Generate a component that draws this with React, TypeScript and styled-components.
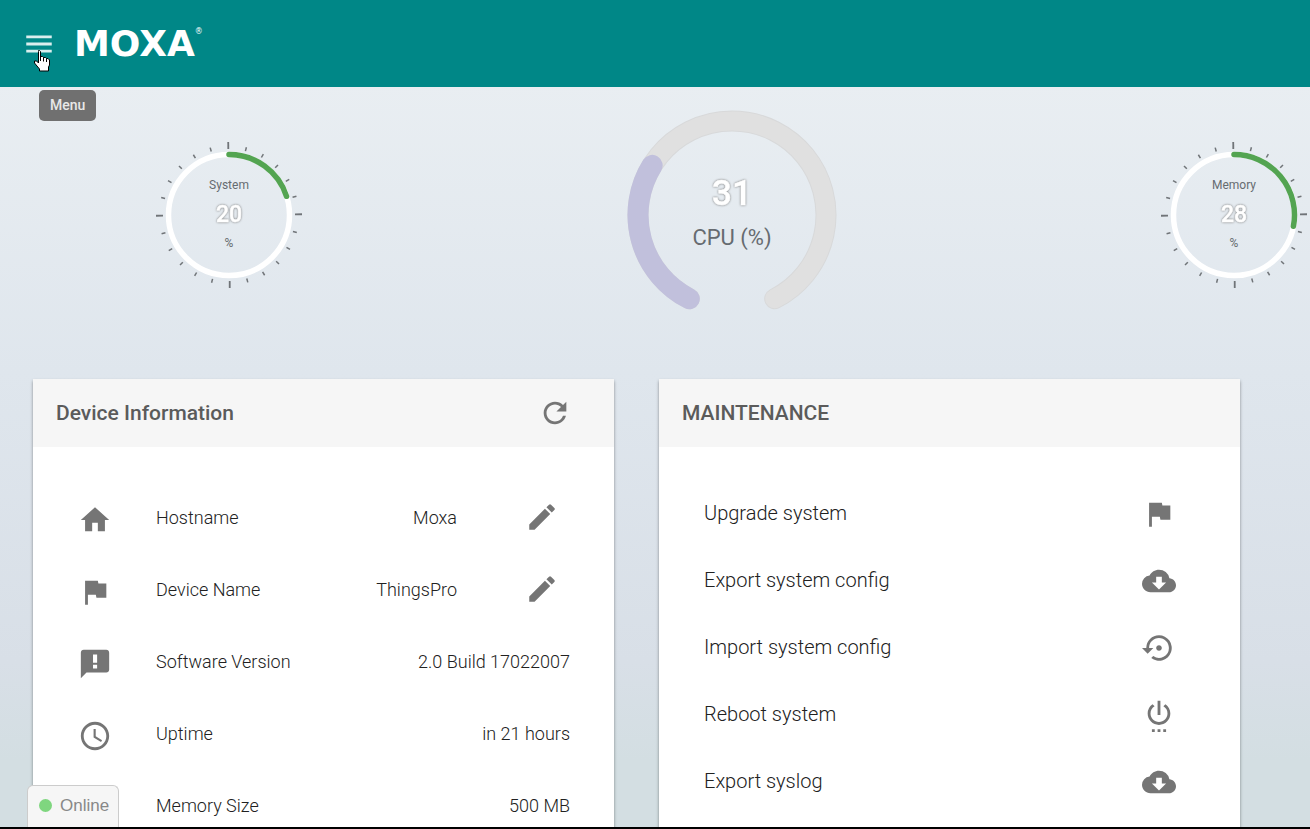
import React from "react";
import styled, { createGlobalStyle } from "styled-components";
import type { IconType } from "react-icons";
import {
  MdMenu, MdHome, MdFlag, MdAccessTime, MdMemory, MdEdit, MdRefresh,
  MdCloudDownload, MdSettingsBackupRestore, MdSettingsPower,
} from "react-icons/md";

const GlobalStyle = createGlobalStyle`
  *, *::before, *::after { box-sizing: border-box; }
  body { margin: 0; font-family: Roboto, "Liberation Sans", sans-serif; color: #212121; }
  button { font: inherit; }
`;

const Page = styled.div`
  display: flex;
  flex-direction: column;
  height: 100vh;
  overflow: hidden;
  border-bottom: 2px solid #000;
  background: linear-gradient(180deg, #e9eef2 10%, #dfe6ed 45%, #d8dfe7 80%, #d3dee2 92%);
`;

const TopBar = styled.header`
  flex: none;
  display: flex;
  align-items: center;
  gap: 18px;
  height: 87px;
  padding: 0 22px;
  background: #008787;
  color: #fff;
`;

const MenuWrap = styled.div`
  position: relative;
  display: flex;
`;

const IconButton = styled.button`
  display: flex;
  padding: 0;
  border: 0;
  background: none;
  color: inherit;
  cursor: pointer;
`;

const MenuButton = styled(IconButton)`
  color: #d9eeee;
`;

const Tooltip = styled.span`
  position: absolute;
  top: 63px;
  left: 17px;
  padding: 0 11px;
  border-radius: 5px;
  background: #707070;
  color: #e8e8e8;
  font-size: 14px;
  font-weight: 500;
  line-height: 31px;
`;

const Pointer = styled.svg`
  position: absolute;
  top: 23px;
  left: 11px;
`;

const Logo = styled.a`
  display: flex;
  align-items: flex-start;
  color: #fff;
  font-family: "DejaVu Sans", sans-serif;
  font-size: 36px;
  font-weight: 700;
  line-height: 36px;
  text-decoration: none;
`;

const Registered = styled.span`
  font-size: 8px;
  font-weight: 400;
  line-height: 12px;
`;

const Gauges = styled.section`
  flex: none;
  display: flex;
  justify-content: space-between;
  align-items: center;
  height: 255px;
  margin-bottom: 37px;
  padding: 0 3px 0 156px;
`;

const Dial = styled.svg`
  display: block;
  overflow: visible;
  flex: none;
`;

const DialText = styled.text<{ $size: number; $strong?: boolean }>`
  font-size: ${(p) => p.$size}px;
  font-weight: ${(p) => (p.$strong ? 500 : 400)};
  fill: ${(p) => (p.$strong ? "#fff" : "#666b70")};
  text-anchor: middle;
  ${(p) => p.$strong && "stroke: #fff; stroke-width: 0.5px; filter: drop-shadow(0 0 1px #777);"}
`;

const Cards = styled.main`
  flex: 1;
  display: grid;
  grid-template-columns: 1fr 1fr;
  gap: 45px;
  padding: 0 70px 0 33px;
`;

const Card = styled.section`
  background: #fff;
  box-shadow: 0 2px 3px rgba(0, 0, 0, 0.4);
`;

const CardHeader = styled.div`
  display: flex;
  align-items: center;
  justify-content: space-between;
  height: 68px;
  padding: 0 42px 0 23px;
  background: #f6f6f6;
  color: #757575;
`;

const CardTitle = styled.h2`
  margin: 0;
  color: #5b5b5b;
  font-size: 21px;
  font-weight: 500;
  line-height: 26px;
`;

const List = styled.ul<{ $top: number }>`
  margin: 0;
  padding: ${(p) => p.$top}px 44px 0 45px;
  list-style: none;
`;

const InfoRow = styled.li`
  display: flex;
  align-items: center;
  height: 72px;
  font-size: 18px;
  font-weight: 300;
`;

const RowIcon = styled.span`
  display: flex;
  width: 78px;
  padding-top: 5px;
  color: #757575;
`;

const InfoValue = styled.span`
  margin-left: auto;
`;

const EditButton = styled(IconButton)`
  width: 113px;
  padding-left: 68px;
  color: #757575;
`;

const ActionRow = styled.li`
  height: 67px;
`;

const ActionButton = styled(IconButton)`
  align-items: center;
  justify-content: space-between;
  width: 100%;
  height: 100%;
  padding-right: 20px;
  font-size: 20px;
  font-weight: 300;
  svg { color: #757575; margin-top: 2px; }
`;

const Status = styled.div`
  position: fixed;
  left: 27px;
  bottom: 2px;
  display: flex;
  align-items: center;
  gap: 8px;
  height: 42px;
  padding: 0 9px 2px 11px;
  border: 1px solid #ccc;
  border-bottom: 0;
  border-radius: 6px 6px 0 0;
  background: #f6f6f6;
  color: #888;
  font-family: "Liberation Sans", sans-serif;
  font-size: 17px;
`;

const StatusDot = styled.span`
  width: 13px;
  height: 13px;
  border-radius: 50%;
  background: #7fd67f;
`;

const FeedbackIcon = ({ size }: { size?: string | number }) => (
  <svg width={size} height={size} viewBox="0 0 24 24" fill="currentColor">
    <path
      fillRule="evenodd"
      d="M20 2H4c-1.100 0-1.990.9-1.990 2L2 22l4-4h14c1.100 0 2-.9 2-2V4c0-1.100-.9-2-2-2zM10.600 5.300h2.900v5.900h-2.900zM10.600 12.600h2.900v2.600h-2.900z"
    />
  </svg>
);

const polar = (r: number, deg: number) => {
  const a = (deg * Math.PI) / 180;
  return `${(r * Math.sin(a)).toFixed(2)} ${(-r * Math.cos(a)).toFixed(2)}`;
};
const arc = (r: number, from: number, to: number) =>
  `M${polar(r, from)}A${r} ${r} 0 ${to - from > 180 ? 1 : 0} 1 ${polar(r, to)}`;

function TickGauge({ label, value }: { label: string; value: number }) {
  return (
    <Dial width={146} height={146} viewBox="-73 -73 146 146" role="img" aria-label={`${label} ${value}%`}>
      <g transform="rotate(-0.6)" stroke="#707478">
        {Array.from({ length: 24 }, (_, i) => (
          <line key={i} y1={-66} y2={i % 6 ? -70 : -73} strokeWidth={i % 6 ? 1.5 : 1.8} transform={`rotate(${i * 15})`} />
        ))}
      </g>
      <circle r={60.5} fill="none" stroke="#fff" strokeWidth={5.5} />
      <path d={arc(60.5, 0, value * 3.6)} fill="none" stroke="#53a451" strokeWidth={5.5} strokeLinecap="round" />
      <DialText $size={12} y={-26}>{label}</DialText>
      <DialText $size={23} $strong y={7}>{value}</DialText>
      <DialText $size={12} y={32}>%</DialText>
    </Dial>
  );
}

function CpuGauge({ value }: { value: number }) {
  return (
    <Dial width={210} height={210} viewBox="-105 -105 210 210" role="img" aria-label={`CPU ${value}%`}>
      <g fill="none" strokeLinecap="round">
        <path d={arc(94, -153, 153)} stroke="#d8d9da" strokeWidth={21} />
        <path d={arc(94, -153, 153)} stroke="#e0e0e0" strokeWidth={19} />
        <path d={arc(94, -153, -153 + value * 3.06)} stroke="#c1c0dc" strokeWidth={21} />
      </g>
      <DialText $size={35} $strong y={-10}>{value}</DialText>
      <DialText $size={22} y={30}>CPU (%)</DialText>
    </Dial>
  );
}

const info: { icon: IconType | typeof FeedbackIcon; label: string; value: string; editable?: boolean }[] = [
  { icon: MdHome, label: "Hostname", value: "Moxa", editable: true },
  { icon: MdFlag, label: "Device Name", value: "ThingsPro", editable: true },
  { icon: FeedbackIcon, label: "Software Version", value: "2.0 Build 17022007" },
  { icon: MdAccessTime, label: "Uptime", value: "in 21 hours" },
  { icon: MdMemory, label: "Memory Size", value: "500 MB" },
];

const actions: { icon: IconType; label: string }[] = [
  { icon: MdFlag, label: "Upgrade system" },
  { icon: MdCloudDownload, label: "Export system config" },
  { icon: MdSettingsBackupRestore, label: "Import system config" },
  { icon: MdSettingsPower, label: "Reboot system" },
  { icon: MdCloudDownload, label: "Export syslog" },
];

export default function App() {
  return (
    <Page>
      <GlobalStyle />
      <TopBar>
        <MenuWrap>
          <MenuButton aria-label="Menu"><MdMenu size={34} /></MenuButton>
          <Tooltip role="tooltip">Menu</Tooltip>
          <Pointer width={17} height={22} viewBox="0 0 17 22" aria-hidden="true">
            <path d="M5.5.5h1l1 1v5h2l1 1h2l1 1h1.500l1.500 1.500v5l-1 2v4h-9v-2l-5-6v-2h2l2 2v-11.500z" fill="#fff" stroke="#000" />
            <path d="M7.500 6v5M10.500 7.500v4M13.500 8.500v3.500" stroke="#000" />
          </Pointer>
        </MenuWrap>
        <Logo href="#">MOXA<Registered>®</Registered></Logo>
      </TopBar>
      <Gauges>
        <TickGauge label="System" value={20} />
        <CpuGauge value={31} />
        <TickGauge label="Memory" value={28} />
      </Gauges>
      <Cards>
        <Card>
          <CardHeader>
            <CardTitle>Device Information</CardTitle>
            <IconButton aria-label="Refresh"><MdRefresh size={34} /></IconButton>
          </CardHeader>
          <List $top={34}>
            {info.map(({ icon: Icon, label, value, editable }) => (
              <InfoRow key={label}>
                <RowIcon><Icon size={34} /></RowIcon>
                <span>{label}</span>
                <InfoValue>{value}</InfoValue>
                {editable && <EditButton aria-label={`Edit ${label}`}><MdEdit size={34} /></EditButton>}
              </InfoRow>
            ))}
          </List>
        </Card>
        <Card>
          <CardHeader><CardTitle>MAINTENANCE</CardTitle></CardHeader>
          <List $top={32}>
            {actions.map(({ icon: Icon, label }) => (
              <ActionRow key={label}>
                <ActionButton>{label}<Icon size={34} /></ActionButton>
              </ActionRow>
            ))}
          </List>
        </Card>
      </Cards>
      <Status role="status"><StatusDot />Online</Status>
    </Page>
  );
}
